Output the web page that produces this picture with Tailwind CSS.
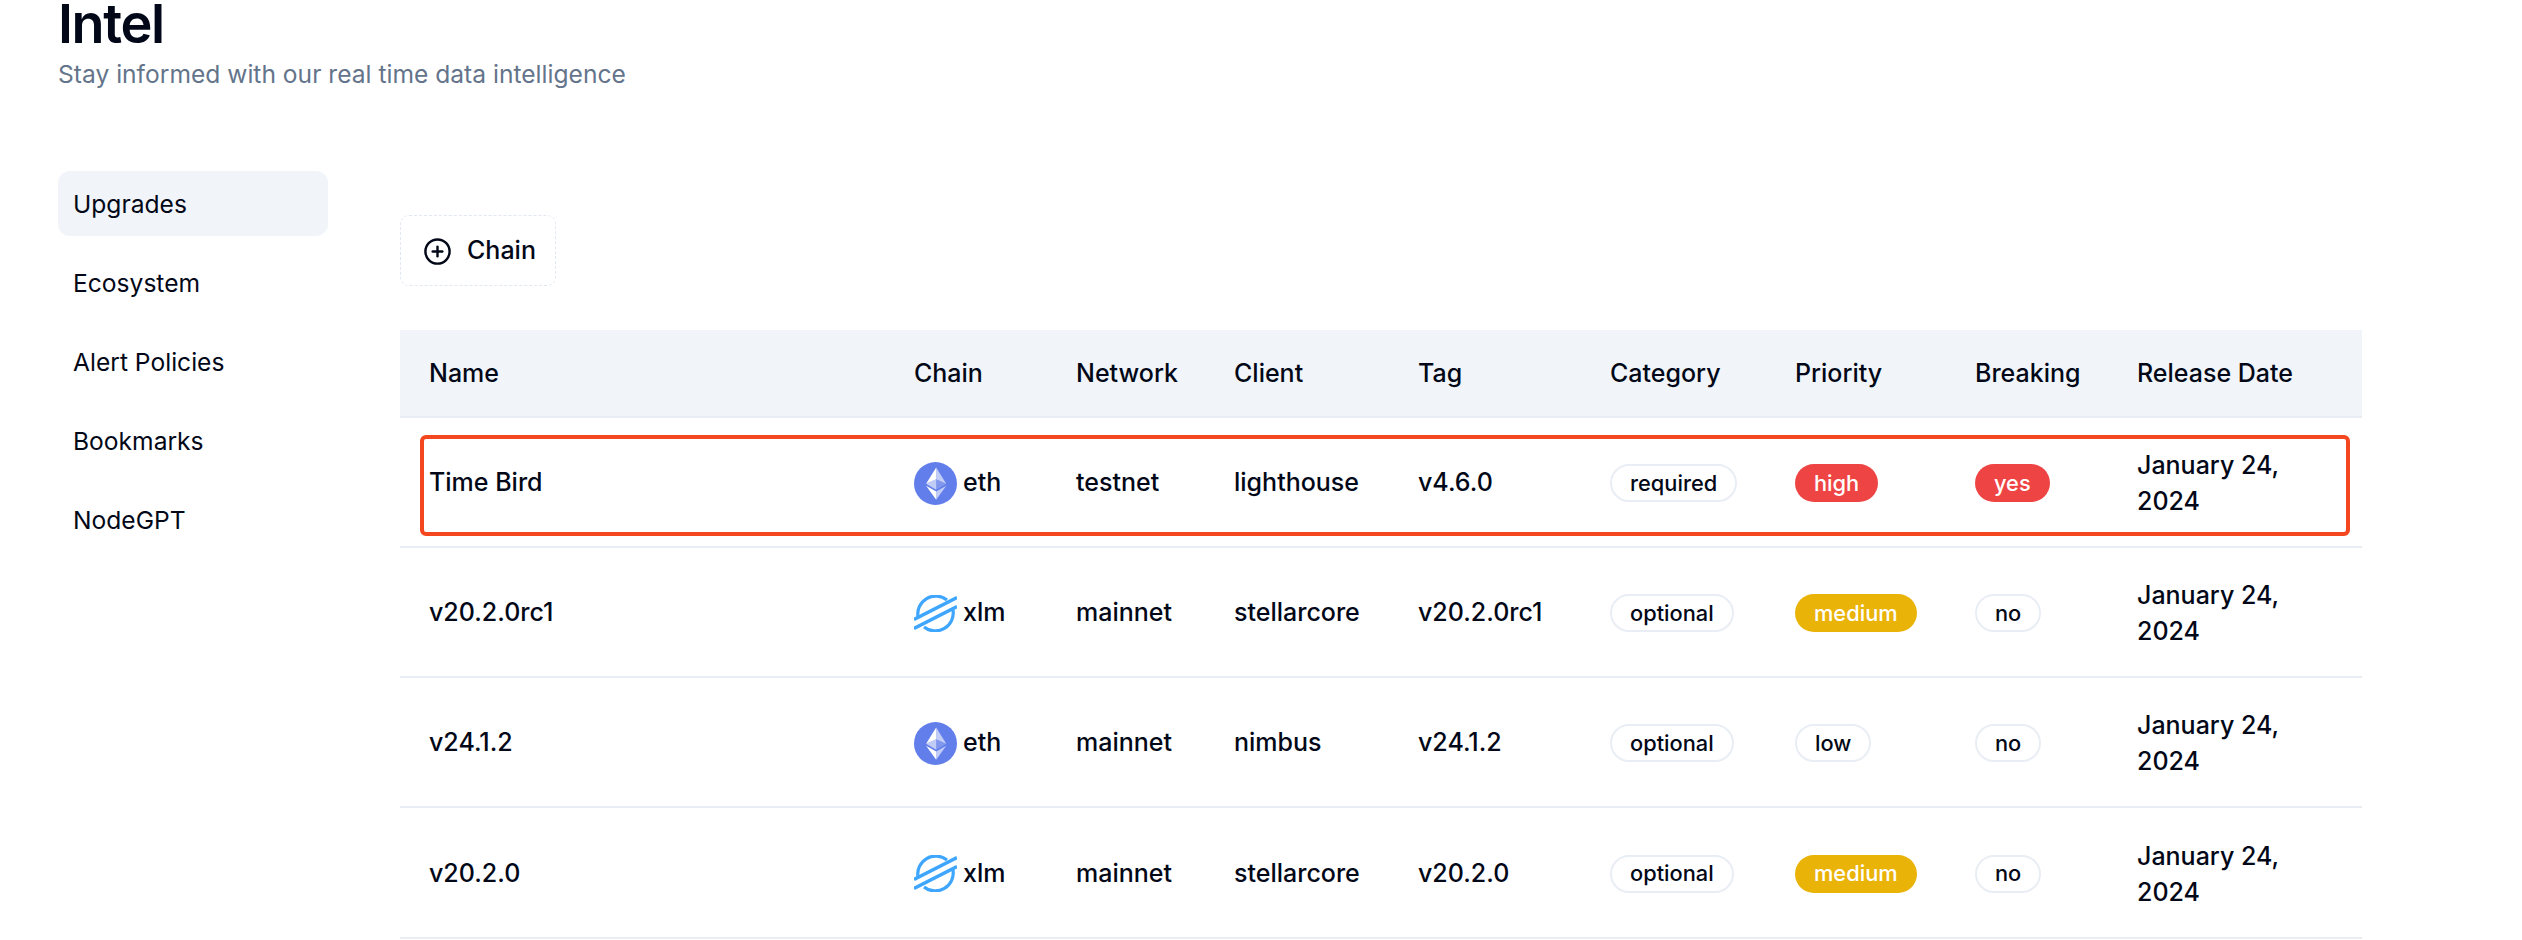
<!DOCTYPE html>
<html lang="en">
<head>
    <meta charset="UTF-8">
    <title>Intel</title>
    <script src="https://cdn.jsdelivr.net/npm/@tailwindcss/browser@4"></script>
</head>
<body class="bg-white h-[940px] overflow-hidden font-['Inter',sans-serif] text-[#020817]">
    <div class="px-[58px]">
        <!-- Heading -->
        <h1 class="text-[54px] leading-[48px] font-semibold tracking-[-0.025em]">Intel</h1>
        <p class="mt-[8px] text-[24.6px] leading-[36px] text-[#64748b]">Stay informed with our real time data intelligence</p>

        <div class="flex mt-[79px]">
            <!-- Sidebar -->
            <nav class="w-[270px] shrink-0 flex flex-col gap-[14px] text-[24.6px] font-[430]">
                <a class="h-[65px] px-[15px] pt-[2px] flex items-center rounded-[12px] bg-[#f1f5f9]">Upgrades</a>
                <a class="h-[65px] px-[15px] pt-[2px] flex items-center rounded-[12px]">Ecosystem</a>
                <a class="h-[65px] px-[15px] pt-[2px] flex items-center rounded-[12px]">Alert Policies</a>
                <a class="h-[65px] px-[15px] pt-[2px] flex items-center rounded-[12px]">Bookmarks</a>
                <a class="h-[65px] px-[15px] pt-[2px] flex items-center rounded-[12px]">NodeGPT</a>
            </nav>

            <main class="ml-[72px] w-[1962px] pt-[44px]">
                <button class="h-[71px] w-[156px] pt-[1px] flex items-center justify-center gap-[15px] rounded-[9px] border border-dashed border-[#e2e8f0] text-[25px] font-[450]">
                    <svg class="size-[29px] ml-[3px]" viewBox="0 0 24 24" fill="none" stroke="currentColor" stroke-width="2" stroke-linecap="round" stroke-linejoin="round"><circle cx="12" cy="12" r="10"/><path d="M8 12h8"/><path d="M12 8v8"/></svg>
                    Chain
                </button>

                <!-- Upgrades table -->
                <div class="relative mt-[44px]">
                    <table class="w-full table-fixed text-[25px] font-[450] text-left [&_th]:pt-[2px] [&_td]:pt-[2px]">
                        <colgroup>
                            <col class="w-[485px]"><col class="w-[162px]"><col class="w-[158px]"><col class="w-[184px]"><col class="w-[192px]"><col class="w-[185px]"><col class="w-[180px]"><col class="w-[162px]"><col class="w-[254px]">
                        </colgroup>
                        <thead>
                            <tr class="h-[87px] bg-[#f1f5f9] border-b-[2px] border-[#e9eef4]">
                                <th class="pl-[29px] font-[450]">Name</th>
                                <th class="pl-[29px] font-[450]">Chain</th>
                                <th class="pl-[29px] font-[450]">Network</th>
                                <th class="pl-[29px] font-[450]">Client</th>
                                <th class="pl-[29px] font-[450]">Tag</th>
                                <th class="pl-[29px] font-[450]">Category</th>
                                <th class="pl-[29px] font-[450]">Priority</th>
                                <th class="pl-[29px] font-[450]">Breaking</th>
                                <th class="pl-[29px] font-[450]">Release Date</th>
                            </tr>
                        </thead>
                        <tbody>
                            <tr class="h-[130px] border-b-[2px] border-[#e9eef4]">
                                <td class="pl-[29px]">Time Bird</td>
                                <td class="pl-[29px]">
                                    <div class="flex items-center gap-[6px]">
                                        <svg class="size-[43px]" viewBox="0 0 32 32"><circle cx="16" cy="16" r="16" fill="#627eea"/><g fill="#fff"><path fill-opacity=".602" d="M16.5 4v8.87l7.5 3.35z"/><path d="M16.5 4L9 16.22l7.5-3.35z"/><path fill-opacity=".602" d="M16.5 21.97V28L24 17.62z"/><path d="M16.5 28v-6.03L9 17.62z"/><path fill-opacity=".2" d="M16.5 20.57l7.5-4.35-7.5-3.35z"/><path fill-opacity=".602" d="M9 16.22l7.5 4.35v-7.7z"/></g></svg>
                                        eth
                                    </div>
                                </td>
                                <td class="pl-[29px]">testnet</td>
                                <td class="pl-[29px]">lighthouse</td>
                                <td class="pl-[29px]">v4.6.0</td>
                                <td class="pl-[29px]"><span class="inline-flex h-[38px] items-center rounded-full border-[2px] border-[#e9eef4] px-[18px] text-[21.8px] font-medium">required</span></td>
                                <td class="pl-[29px]"><span class="inline-flex h-[38px] items-center rounded-full bg-[#ef4444] px-[19px] text-[21.8px] font-medium text-white">high</span></td>
                                <td class="pl-[29px]"><span class="inline-flex h-[38px] items-center rounded-full bg-[#ef4444] px-[19px] text-[21.8px] font-medium text-white">yes</span></td>
                                <td class="pl-[29px]"><div class="w-[170px] leading-[36px]">January 24, 2024</div></td>
                            </tr>
                            <tr class="h-[130px] border-b-[2px] border-[#e9eef4]">
                                <td class="pl-[29px]">v20.2.0rc1</td>
                                <td class="pl-[29px]">
                                    <div class="flex items-center gap-[6px]">
                                        <svg class="w-[43px] h-[37px]" viewBox="0 0 43 37" fill="none" stroke="#3ea6ff"><g stroke-width="3.4"><path d="M0 24.5L43 2.5"/><path d="M0 33.5L43 11.5"/></g><g stroke-width="3.2"><path d="M4 22A18 18 0 0 1 33 5"/><path d="M39 15A18 18 0 0 1 10 32"/></g></svg>
                                        xlm
                                    </div>
                                </td>
                                <td class="pl-[29px]">mainnet</td>
                                <td class="pl-[29px]">stellarcore</td>
                                <td class="pl-[29px]">v20.2.0rc1</td>
                                <td class="pl-[29px]"><span class="inline-flex h-[38px] items-center rounded-full border-[2px] border-[#e9eef4] px-[18px] text-[21.8px] font-medium">optional</span></td>
                                <td class="pl-[29px]"><span class="inline-flex h-[38px] items-center rounded-full bg-[#eab308] px-[19px] text-[21.8px] font-medium text-white">medium</span></td>
                                <td class="pl-[29px]"><span class="inline-flex h-[38px] items-center rounded-full border-[2px] border-[#e9eef4] px-[18px] text-[21.8px] font-medium">no</span></td>
                                <td class="pl-[29px]"><div class="w-[170px] leading-[36px]">January 24, 2024</div></td>
                            </tr>
                            <tr class="h-[130px] border-b-[2px] border-[#e9eef4]">
                                <td class="pl-[29px]">v24.1.2</td>
                                <td class="pl-[29px]">
                                    <div class="flex items-center gap-[6px]">
                                        <svg class="size-[43px]" viewBox="0 0 32 32"><circle cx="16" cy="16" r="16" fill="#627eea"/><g fill="#fff"><path fill-opacity=".602" d="M16.5 4v8.87l7.5 3.35z"/><path d="M16.5 4L9 16.22l7.5-3.35z"/><path fill-opacity=".602" d="M16.5 21.97V28L24 17.62z"/><path d="M16.5 28v-6.03L9 17.62z"/><path fill-opacity=".2" d="M16.5 20.57l7.5-4.35-7.5-3.35z"/><path fill-opacity=".602" d="M9 16.22l7.5 4.35v-7.7z"/></g></svg>
                                        eth
                                    </div>
                                </td>
                                <td class="pl-[29px]">mainnet</td>
                                <td class="pl-[29px]">nimbus</td>
                                <td class="pl-[29px]">v24.1.2</td>
                                <td class="pl-[29px]"><span class="inline-flex h-[38px] items-center rounded-full border-[2px] border-[#e9eef4] px-[18px] text-[21.8px] font-medium">optional</span></td>
                                <td class="pl-[29px]"><span class="inline-flex h-[38px] items-center rounded-full border-[2px] border-[#e9eef4] px-[18px] text-[21.8px] font-medium">low</span></td>
                                <td class="pl-[29px]"><span class="inline-flex h-[38px] items-center rounded-full border-[2px] border-[#e9eef4] px-[18px] text-[21.8px] font-medium">no</span></td>
                                <td class="pl-[29px]"><div class="w-[170px] leading-[36px]">January 24, 2024</div></td>
                            </tr>
                            <tr class="h-[131px] border-b-[2px] border-[#e9eef4]">
                                <td class="pl-[29px]">v20.2.0</td>
                                <td class="pl-[29px]">
                                    <div class="flex items-center gap-[6px]">
                                        <svg class="w-[43px] h-[37px]" viewBox="0 0 43 37" fill="none" stroke="#3ea6ff"><g stroke-width="3.4"><path d="M0 24.5L43 2.5"/><path d="M0 33.5L43 11.5"/></g><g stroke-width="3.2"><path d="M4 22A18 18 0 0 1 33 5"/><path d="M39 15A18 18 0 0 1 10 32"/></g></svg>
                                        xlm
                                    </div>
                                </td>
                                <td class="pl-[29px]">mainnet</td>
                                <td class="pl-[29px]">stellarcore</td>
                                <td class="pl-[29px]">v20.2.0</td>
                                <td class="pl-[29px]"><span class="inline-flex h-[38px] items-center rounded-full border-[2px] border-[#e9eef4] px-[18px] text-[21.8px] font-medium">optional</span></td>
                                <td class="pl-[29px]"><span class="inline-flex h-[38px] items-center rounded-full bg-[#eab308] px-[19px] text-[21.8px] font-medium text-white">medium</span></td>
                                <td class="pl-[29px]"><span class="inline-flex h-[38px] items-center rounded-full border-[2px] border-[#e9eef4] px-[18px] text-[21.8px] font-medium">no</span></td>
                                <td class="pl-[29px]"><div class="w-[170px] leading-[36px]">January 24, 2024</div></td>
                            </tr>
                        </tbody>
                    </table>
                    <!-- Annotation drawn over the first row -->
                    <div class="absolute left-[20px] top-[105px] w-[1930px] h-[101px] rounded-[6px] border-[4px] border-[#f4461f] pointer-events-none"></div>
                </div>
            </main>
        </div>
    </div>
</body>
</html>
